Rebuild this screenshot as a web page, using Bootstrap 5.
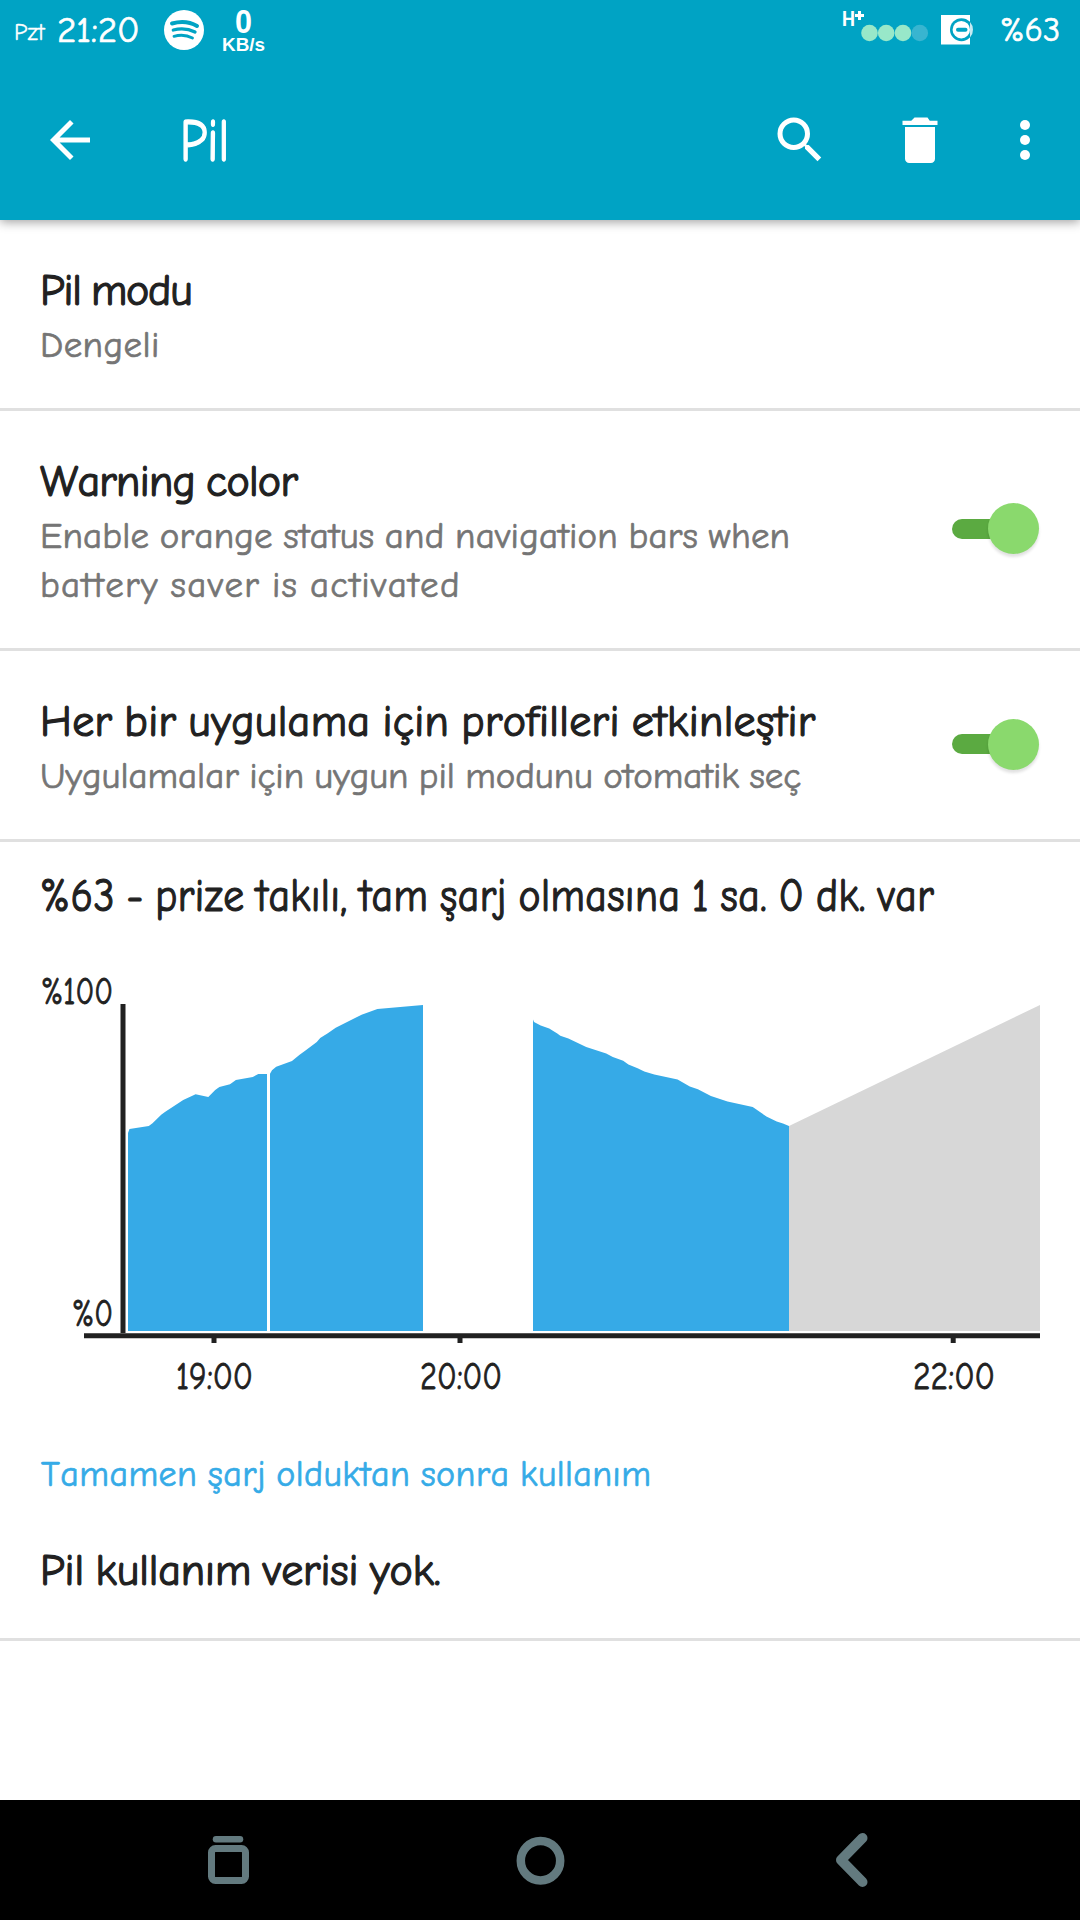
<!DOCTYPE html>
<html lang="tr">
<head>
<meta charset="utf-8">
<meta name="viewport" content="width=device-width, initial-scale=1">
<title>Pil</title>
<link href="https://cdn.jsdelivr.net/npm/bootstrap@5.3.0/dist/css/bootstrap.min.css" rel="stylesheet">
<style>
body{width:1080px;height:1920px;overflow:hidden;background:#fff;color:#212121;font-family:"Comic Sans MS","Comic Neue",Lato,sans-serif;-webkit-text-stroke:.7px currentColor;font-kerning:none;font-variant-ligatures:none}
svg{display:block;flex:none;overflow:visible}
.app-head{height:220px;background:#00a3c4;box-shadow:0 2px 10px rgba(0,0,0,.38);z-index:1}
.status-strip{height:60px;padding:0 22px 0 14px}
.tool-strip{height:160px;padding:0 25px 0 40px}
.tool-icons{gap:60px}
.tool-icons svg:last-child{margin-left:-15px}
.app-title{font-size:61px;line-height:72px;width:50px;margin-left:80px;padding-top:2px;transform:scaleX(.8);transform-origin:left;white-space:nowrap;-webkit-text-stroke-width:1.4px}
.day{font-size:24px;line-height:60px;width:43px;white-space:nowrap;padding-top:3px;-webkit-text-stroke-width:.3px}
.clock{font-size:37px;line-height:62px;width:107px;white-space:nowrap}
.pct{font-size:34px;line-height:62px;width:58px;margin-left:25px;white-space:nowrap}
.pref{padding:43px 40px 40px;border-bottom:3px solid #e0e0e0}
.pref-title{font-size:44px;line-height:56px;white-space:nowrap;-webkit-text-stroke-width:1.2px;word-spacing:-3px}
.pref-sub{font-size:37px;line-height:49px;color:#757575;white-space:nowrap;padding-top:2px;margin-bottom:-2px;word-spacing:-2px}
.usage{padding:27px 0 39px;border-bottom:3px solid #e0e0e0}
.usage-head{font-size:46px;line-height:56px;padding-left:40px;white-space:nowrap;width:1080px;transform:scaleX(.904);transform-origin:40px 0;-webkit-text-stroke-width:1.2px;word-spacing:-3px;letter-spacing:.5px}
.battery-chart{margin-top:35px}
.chart-label{font-size:39px;fill:#212121;stroke:#212121;stroke-width:.8px}
.full-link{font-size:36px;line-height:49px;color:#35abe7;margin:50px 0 44px;padding-left:41px;word-spacing:-2px;letter-spacing:.42px}
.no-data{padding-left:40px}
.ls-a{letter-spacing:-1.25px}.ls-b{letter-spacing:-.1px}.ls-c{letter-spacing:-.75px}
.ls-d{letter-spacing:.17px}.ls-e{letter-spacing:1.3px}.ls-f{letter-spacing:.33px}.ls-g{letter-spacing:.4px}.ls-h{letter-spacing:-.05px}
.toggle-track{width:62px;height:20px;border-radius:10px;background:#5baa41}
.toggle-thumb{width:51px;height:51px;border-radius:50%;background:#8ad96d;margin-left:-26px;box-shadow:0 3px 3px rgba(0,0,0,.12)}
.toggle{margin:-5px 1px 0 0}
.nav-strip{height:120px;background:#000}
</style>
<script src="https://cdn.jsdelivr.net/npm/bootstrap@5.3.0/dist/js/bootstrap.bundle.min.js"></script>
</head>
<body class="d-flex flex-column">
<header class="app-head text-white position-relative">
  <div class="status-strip d-flex align-items-center">
    <span class="day">Pzt</span>
    <span class="clock">21:20</span>
    <svg width="40" height="60" viewBox="0 0 40 60"><circle cx="20" cy="30" r="20" fill="#fff"/><g fill="none" stroke="#00a3c4" stroke-linecap="round"><path d="M8 23.500Q22 19.500 33 26" stroke-width="4"/><path d="M9.300 30Q21 27 31 32" stroke-width="3.300"/><path d="M10 36.300Q20 33.500 28.500 38" stroke-width="2.800"/></g></svg>
    <svg class="ms-3" width="46" height="60" viewBox="220 0 46 60" fill="#fff" font-family="Liberation Sans, Arial, sans-serif" font-weight="700" style="-webkit-text-stroke:0"><text x="235" y="33" font-size="34" textLength="17" lengthAdjust="spacingAndGlyphs">0</text><text x="222" y="50.500" font-size="18" textLength="43" lengthAdjust="spacingAndGlyphs">KB/s</text></svg>
    <svg class="ms-auto" width="135" height="60" viewBox="840 0 135 60">
      <text x="842" y="26" font-family="Roboto, sans-serif" font-weight="700" font-size="20" textLength="13" lengthAdjust="spacingAndGlyphs" fill="#fff" style="-webkit-text-stroke:0">H</text>
      <path d="M855 15.500h9M859.500 11v9" stroke="#fff" stroke-width="3"/>
      <g fill="#98e8c9"><circle cx="869.500" cy="33" r="8.300"/><circle cx="886.200" cy="33" r="8.300"/><circle cx="903" cy="33" r="8.300"/></g><circle cx="919.800" cy="33" r="8.300" fill="#38b5d0"/>
      <path d="M941 15h29v29.500h-29z" fill="#fff"/><circle cx="961.500" cy="29.700" r="11.500" fill="#00a3c4"/><path d="M970 22a11.500 11.500 0 0 1 0 15.500z" fill="#c5eaf2"/><circle cx="961.300" cy="29.700" r="8.700" fill="#fff"/><path d="M958 29.700h7.500" stroke="#00a3c4" stroke-width="4" stroke-linecap="round"/>
    </svg>
    <span class="pct">%63</span>
  </div>
  <div class="tool-strip d-flex align-items-center">
    <svg width="60" height="60" viewBox="0 0 24 24" fill="#fff"><path d="M20 11H7.830l5.590-5.590L12 4l-8 8 8 8 1.410-1.410L7.830 13H20v-2z"/></svg>
    <h1 class="app-title fw-normal mb-0">Pil</h1>
    <div class="tool-icons d-flex ms-auto">
      <svg width="60" height="60" viewBox="0 0 24 24" fill="#fff"><path d="M15.500 14h-.790l-.280-.270A6.471 6.471 0 0 0 16 9.500 6.500 6.500 0 1 0 9.500 16c1.610 0 3.090-.590 4.230-1.570l.270.280v.790l5 4.990L20.490 19l-4.990-5zm-6 0C7.010 14 5 11.990 5 9.500S7.010 5 9.500 5 14 7.010 14 9.500 11.990 14 9.500 14z"/></svg>
      <svg width="60" height="60" viewBox="0 0 24 24" fill="#fff"><path d="M6 19.500c0 1 .8 1.700 1.700 1.700h8.600c1 0 1.700-.7 1.700-1.700V6.800H6zM19 4.300h-3.100L15 3H9.800L8.500 4.300H5V6h14z"/></svg>
      <svg width="60" height="60" viewBox="0 0 24 24" fill="#fff"><circle cx="12" cy="6" r="2"/><circle cx="12" cy="12" r="2"/><circle cx="12" cy="18" r="2"/></svg>
    </div>
  </div>
</header>
<main class="flex-grow-1">
  <section class="pref">
    <div class="pref-title ls-a">Pil modu</div>
    <div class="pref-sub ls-g">Dengeli</div>
  </section>
  <section class="pref d-flex justify-content-between align-items-center">
    <div>
      <div class="pref-title ls-c">Warning color</div>
      <div class="pref-sub"><span class="ls-d">Enable orange status and navigation bars when</span><br><span class="ls-e">battery saver is activated</span></div>
    </div>
    <div class="toggle d-flex align-items-center" role="switch" aria-checked="true"><div class="toggle-track"></div><div class="toggle-thumb"></div></div>
  </section>
  <section class="pref d-flex justify-content-between align-items-center">
    <div>
      <div class="pref-title ls-f">Her bir uygulama için profilleri etkinleştir</div>
      <div class="pref-sub ls-h">Uygulamalar için uygun pil modunu otomatik seç</div>
    </div>
    <div class="toggle d-flex align-items-center" role="switch" aria-checked="true"><div class="toggle-track"></div><div class="toggle-thumb"></div></div>
  </section>
  <section class="usage">
    <div class="usage-head">%63 - prize takılı, tam şarj olmasına 1 sa. 0 dk. var</div>
    <svg class="battery-chart" width="1080" height="440" viewBox="0 960 1080 440">
      <g fill="#36aae7">
        <path d="M128 1331V1133L129.500 1129 148.800 1126 152.500 1123.300 161.200 1114.700 165.300 1111.700 183.200 1100 195.600 1094.300 208.300 1097 215.200 1090 219.400 1087 230 1084.300 235.900 1080 252.800 1077 258.300 1074H267V1331z"/>
        <path d="M270 1331V1073.700L272 1070.300 276.200 1066.700 292 1061 299.600 1054.700 304.800 1051 316.800 1042 320.200 1038 327.800 1033.300 335.700 1027.700 361.600 1014.700 377.400 1009 423 1005V1331z"/>
        <path d="M533 1331V1019.600L534 1022 540.700 1025.400 549.200 1028.600 557.300 1033.600 560.300 1035.700 568.400 1038.600 586.200 1047.100 606.200 1053.600 612.800 1057.100 623.200 1060.700 628.400 1064.600 637.600 1068.200 644.300 1071.400 654.300 1074.600 677.600 1079.600 689.800 1086.400 697.900 1089.300 710.900 1096 727.500 1101.400 752.700 1107.100 756 1109.300 766.400 1116.400 776.700 1121.400 783 1123.600 789 1126V1331z"/>
      </g>
      <path d="M789 1331V1126L1040 1005V1331z" fill="#d7d7d7"/>
      <g stroke="#212121" stroke-width="5"><path d="M123 1004V1333M84 1335.800H1040M214 1336V1343M460 1336V1343M953.200 1336V1343"/></g>
      <g class="chart-label">
        <text x="41" y="1004" textLength="72" lengthAdjust="spacingAndGlyphs">%100</text>
        <text x="72" y="1326" textLength="41" lengthAdjust="spacingAndGlyphs">%0</text>
        <text x="176" y="1389" textLength="77" lengthAdjust="spacingAndGlyphs">19:00</text>
        <text x="420" y="1389" textLength="82" lengthAdjust="spacingAndGlyphs">20:00</text>
        <text x="913" y="1389" textLength="82" lengthAdjust="spacingAndGlyphs">22:00</text>
      </g>
    </svg>
    <div class="full-link">Tamamen şarj olduktan sonra kullanım</div>
    <div class="pref-title no-data ls-b">Pil kullanım verisi yok.</div>
  </section>
</main>
<nav class="nav-strip">
  <svg width="1080" height="120" viewBox="0 1800 1080 120">
    <g fill="none" stroke="#637a7f"><rect x="211.500" y="1848.500" width="34" height="32" rx="4" stroke-width="7"/><path d="M216 1839.300H240" stroke-width="6.500" stroke-linecap="round"/><circle cx="540.500" cy="1860.700" r="19.700" stroke-width="8.500"/><path d="M862.500 1838L841 1860 862.500 1882" stroke-width="10" stroke-linecap="round" stroke-linejoin="round"/></g>
  </svg>
</nav>
</body>
</html>
